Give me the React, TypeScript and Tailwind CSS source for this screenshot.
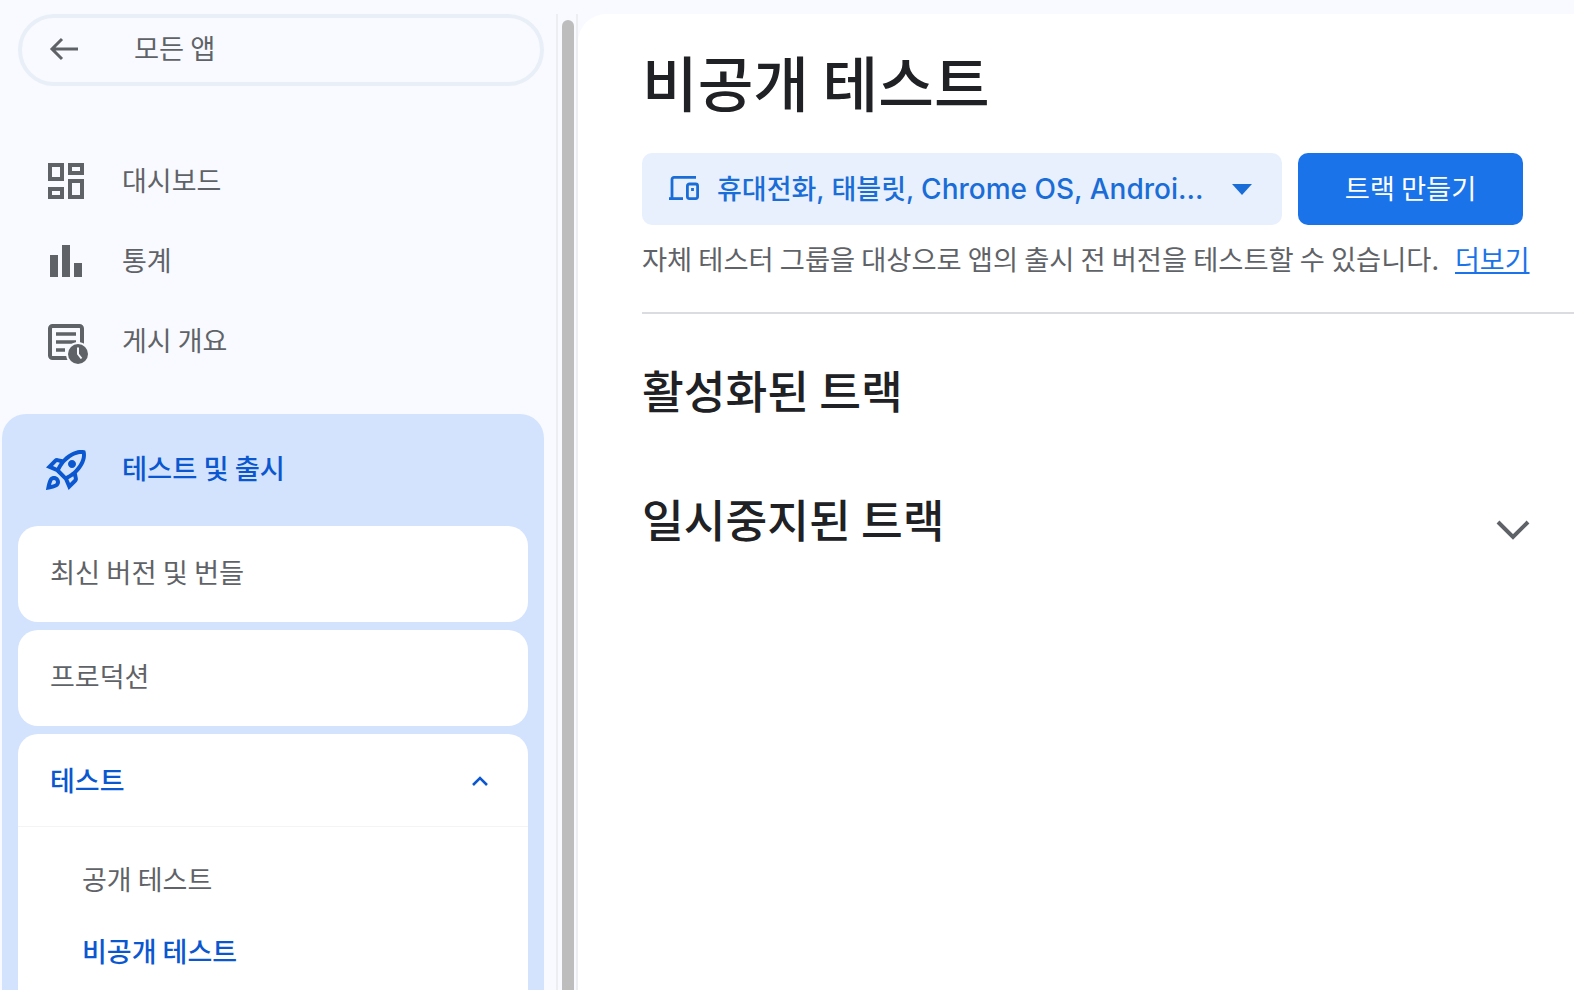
const font = { fontFamily: '"Noto Sans CJK KR", "Noto Sans", sans-serif' };

function DashboardIcon() {
  return (
    <svg width="36" height="36" viewBox="0 0 36 36" fill="none" stroke="#5f6368" strokeWidth="4">
      <rect x="2" y="2" width="12" height="14" />
      <rect x="22" y="2" width="12" height="8" />
      <rect x="2" y="26" width="12" height="8" />
      <rect x="22" y="18" width="12" height="16" />
    </svg>
  );
}

function StatsIcon() {
  return (
    <svg className="ml-[2px]" width="32" height="32" viewBox="0 0 32 32" fill="#5f6368">
      <rect x="0" y="10" width="8" height="22" />
      <rect x="12" y="0" width="8" height="32" />
      <rect x="24" y="18" width="8" height="14" />
    </svg>
  );
}

function OverviewIcon() {
  return (
    <svg className="mt-[6px]" width="40" height="40" viewBox="0 0 40 40" fill="none">
      <rect x="2" y="2" width="32" height="32" rx="2.500" stroke="#5f6368" strokeWidth="4" />
      <path d="M8 10h20M8 18h20M8 26h9" stroke="#5f6368" strokeWidth="3.500" />
      <circle cx="30" cy="30" r="12" fill="#f8faff" />
      <circle cx="30" cy="30" r="10" fill="#5f6368" />
      <path d="M30 23.500V30l3.500 4.500" stroke="#f8faff" strokeWidth="2" />
    </svg>
  );
}

function RocketIcon() {
  return (
    <svg width="48" height="48" viewBox="0 0 24 24" fill="#0b57d0">
      <path d="M6,15c-0.83,0-1.58,0.34-2.12,0.88C2.7,17.06,2,22,2,22s4.94-0.7,6.12-1.88C8.66,19.58,9,18.83,9,18C9,16.34,7.66,15,6,15z M6.71,18.71c-0.28,0.28-2.17,0.76-2.17,0.76s0.47-1.88,0.76-2.17C5.47,17.11,5.72,17,6,17c0.55,0,1,0.45,1,1C7,18.28,6.89,18.53,6.71,18.71z M17.42,13.65L17.42,13.65c6.36-6.36,4.24-11.31,4.24-11.31s-4.95-2.12-11.31,4.24l-2.49-0.5C7.21,5.95,6.53,6.16,6.05,6.63L2,10.69l5,2.14L11.17,17l2.14,5l4.05-4.05c0.47-0.47,0.68-1.15,0.55-1.81L17.42,13.65z M7.41,10.83L5.5,10.01l1.97-1.97l1.44,0.29C8.34,9.16,7.83,10.03,7.41,10.83z M13.99,18.5l-0.82-1.91c0.8-0.42,1.67-0.93,2.49-1.5l0.29,1.44L13.99,18.5z M16,12.24c-1.32,1.32-3.38,2.4-4.04,2.73l-2.93-2.93c0.32-0.65,1.4-2.71,2.73-4.04c4.68-4.68,8.23-3.99,8.23-3.99S20.68,7.56,16,12.24z M15,11c1.1,0,2-0.9,2-2s-0.9-2-2-2s-2,0.9-2,2S13.9,11,15,11z" />
    </svg>
  );
}

function DevicesIcon() {
  return (
    <svg className="mb-[3px] shrink-0" width="30" height="24" viewBox="0 0 30 24" fill="none" stroke="#1a6dd6" strokeWidth="2.800">
      <path d="M27 1.400H5a2 2 0 0 0-2 2V22" />
      <path d="M0 22.600h14" />
      <rect x="18.400" y="8" width="10.200" height="14.600" rx="2" />
      <path d="M23.500 12v3" />
    </svg>
  );
}

function NavItem({ icon, label }: { icon: React.ReactNode; label: string }) {
  return (
    <div className="flex h-[80px] items-center pl-[48px]">
      <div className="flex w-[74px] shrink-0 items-center">{icon}</div>
      <span className="pb-[1px] text-[27px] text-[#5f6368]">{label}</span>
    </div>
  );
}

export default function App() {
  return (
    <div className="flex h-[990px] w-[1574px] overflow-hidden bg-[#f8faff]" style={font}>
      <aside className="w-[556px] shrink-0 pt-[14px]">
        <div className="ml-[18px] flex h-[72px] w-[526px] items-center rounded-full border-4 border-[#e8eff7] pl-[26px]">
          <svg className="mb-[2px]" width="32" height="32" viewBox="0 0 32 32" fill="none" stroke="#5f6368" strokeWidth="3">
            <path d="M30 16H5M14 6 4 16l10 10" />
          </svg>
          <span className="ml-[54px] pb-[6px] text-[27.3px] text-[#5f6368]">모든 앱</span>
        </div>

        <nav className="mt-[55px]">
          <NavItem icon={<DashboardIcon />} label="대시보드" />
          <NavItem icon={<StatsIcon />} label="통계" />
          <NavItem icon={<OverviewIcon />} label="게시 개요" />
        </nav>

        <div className="mt-[33px] ml-[2px] w-[542px] rounded-[24px] bg-[#d3e3fd] px-[16px]">
          <div className="flex h-[112px] items-center pl-[24px]">
            <div className="flex w-[80px] shrink-0 items-center"><RocketIcon /></div>
            <span className="pb-[6px] text-[27.3px] font-medium text-[#0b57d0]">테스트 및 출시</span>
          </div>
          <div className="flex flex-col gap-[8px]">
            <div className="flex h-[96px] items-center rounded-[20px] bg-white pb-[6px] pl-[32px] text-[27.3px] text-[#5f6368]">최신 버전 및 번들</div>
            <div className="flex h-[96px] items-center rounded-[20px] bg-white pb-[4px] pl-[32px] text-[27px] text-[#5f6368]">프로덕션</div>
            <div className="rounded-[20px] bg-white pb-[40px]">
              <div className="flex h-[93px] items-center justify-between border-b border-[#f3f4f6] pr-[38px] pl-[32px]">
                <span className="text-[27px] font-medium text-[#0b57d0]">테스트</span>
                <svg className="mt-[2px]" width="20" height="12" viewBox="0 0 20 12" fill="none" stroke="#0b57d0" strokeWidth="2.600">
                  <path d="M3 10 10 3l7 7" />
                </svg>
              </div>
              <div className="mt-[16px] flex h-[72px] items-center pl-[64px] text-[27px] text-[#5f6368]">공개 테스트</div>
              <div className="flex h-[72px] items-center pl-[64px] text-[27px] font-medium text-[#0b57d0]">비공개 테스트</div>
            </div>
          </div>
        </div>
      </aside>

      <div className="mt-[14px] w-[22px] shrink-0 border-x-2 border-[#eceef1] pl-[4px]">
        <div className="mt-[6px] h-[980px] w-[12px] rounded-t-full bg-[#bdbdbd]" />
      </div>

      <main className="mt-[14px] flex-1 rounded-tl-[28px] bg-white pl-[64px]">
        <h1 className="mt-[23px] text-[60.5px] leading-[88px] font-medium text-[#202124]">비공개 테스트</h1>

        <div className="mt-[28px] flex gap-[16px]">
          <div className="flex h-[72px] w-[640px] items-center rounded-[10px] bg-[#e8f0fe] pl-[27px] text-[#1a6dd6]">
            <DevicesIcon />
            <span
              className="ml-[18px] w-[489px] text-[27px] font-medium whitespace-nowrap"
              style={{ fontFamily: 'Inter, "Noto Sans CJK KR", sans-serif' }}
            >
              휴대전화, 태블릿, <span className="text-[28px]">Chrome OS, Androi...</span>
            </span>
            <svg className="ml-[26px]" width="20" height="11" viewBox="0 0 20 11" fill="#1a6dd6">
              <path d="M0 0h20L10 11z" />
            </svg>
          </div>
          <div className="flex h-[72px] w-[225px] items-center justify-center rounded-[10px] bg-[#1a73e8] pb-[4px] text-[27.3px] text-white">트랙 만들기</div>
        </div>

        <p className="mt-[13px] text-[27.3px] leading-[40px] text-[#5f6368]">
          자체 테스터 그룹을 대상으로 앱의 출시 전 버전을 테스트할 수 있습니다.
          <a className="ml-[16px] text-[27px] text-[#1a73e8] underline">더보기</a>
        </p>

        <div className="mt-[33px] h-[2px] bg-[#dadce0]" />

        <h2 className="mt-[39px] text-[45.4px] leading-[72px] font-medium text-[#202124]">활성화된 트랙</h2>

        <div className="mt-[57px] flex items-center justify-between pr-[44px]">
          <h2 className="text-[45.4px] leading-[72px] font-medium text-[#202124]">일시중지된 트랙</h2>
          <svg className="mt-[24px]" width="34" height="22" viewBox="0 0 34 22" fill="none" stroke="#5f6368" strokeWidth="4">
            <path d="M2 3l15 15L32 3" />
          </svg>
        </div>
      </main>
    </div>
  );
}
